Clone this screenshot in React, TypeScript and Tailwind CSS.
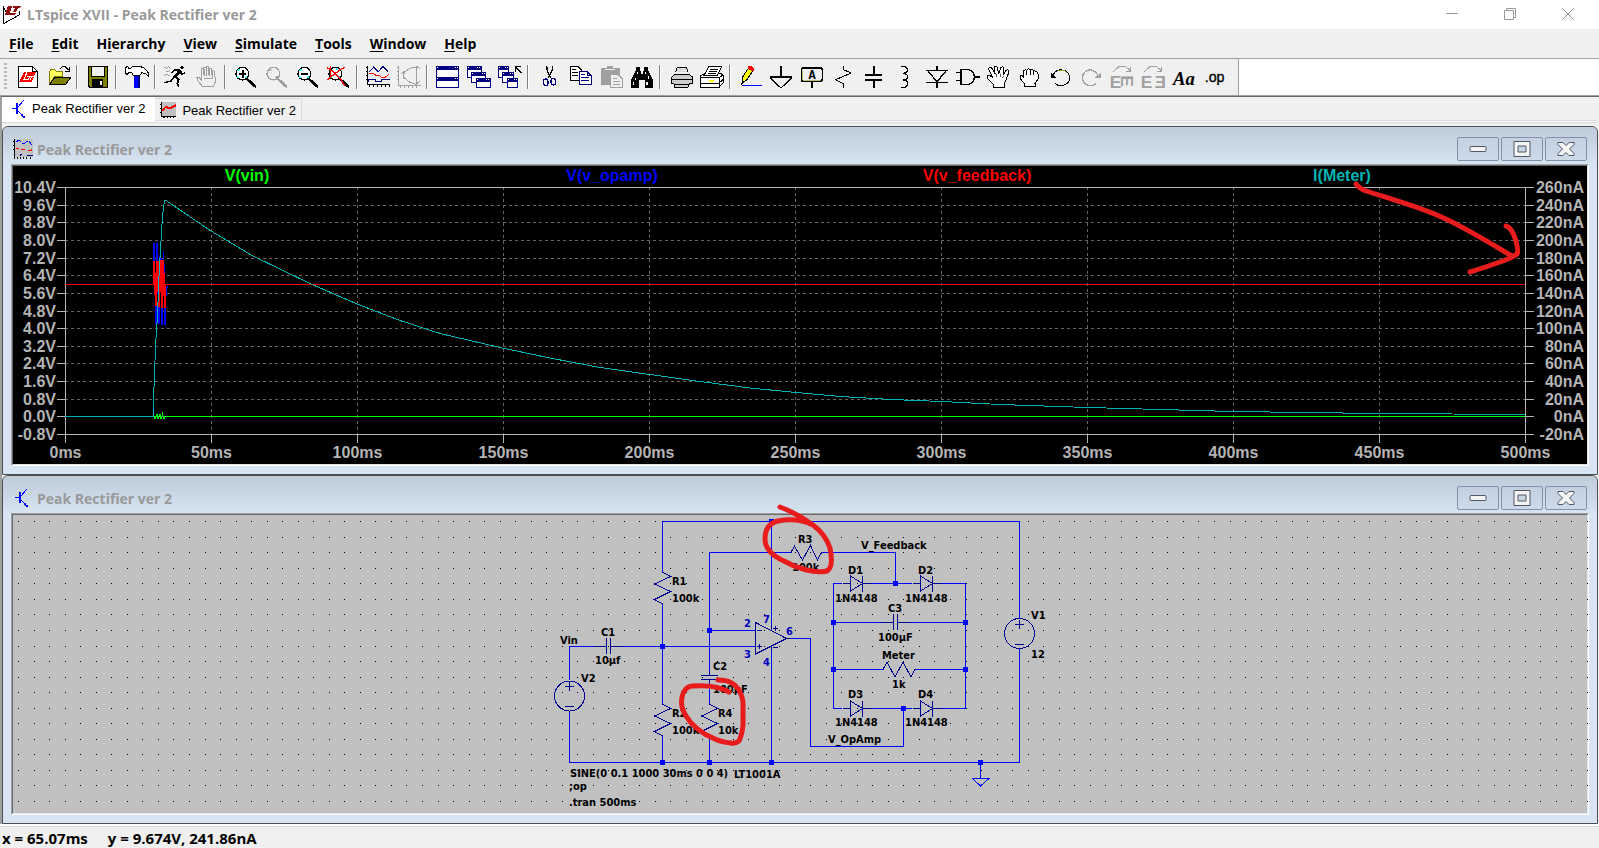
import type { ReactNode } from 'react'

type ToolItem = { label: string; icon: ReactNode } | 'sep'

const MENUS: [string, string, string][] = [
  ['', 'F', 'ile'],
  ['', 'E', 'dit'],
  ['H', 'i', 'erarchy'],
  ['', 'V', 'iew'],
  ['', 'S', 'imulate'],
  ['', 'T', 'ools'],
  ['', 'W', 'indow'],
  ['', 'H', 'elp'],
]

const UI_FONT = "font-['Segoe_UI','Open_Sans','Noto_Sans',sans-serif]"

/* ---------- toolbar icons, drawn on a 72 unit grid (3 units = 1px) ---------- */

const GRAY = '#a0a0a0'

function Magnifier({ color = '#000', glass = '#fff', children }: { color?: string; glass?: string; children?: ReactNode }) {
  return (
    <>
      <circle cx="28" cy="26" r="19" fill={glass} stroke={color} strokeWidth="4" />
      <path d="M42 42L50 50" stroke={color} strokeWidth="5" />
      <path d="M50 49L69 66" stroke={color} strokeWidth="8" />
      {children}
    </>
  )
}

function MiniWindow({ x, y, w = 42, h = 27 }: { x: number; y: number; w?: number; h?: number }) {
  return (
    <>
      <rect x={x + 1} y={y + 1} width={w} height={h} fill="#fff" stroke="#000080" strokeWidth="3" />
      <rect x={x} y={y} width={w + 3} height="12" fill="#000080" />
      <path d={`M${x + 3} ${y + 5}h3M${x + w - 10} ${y + 5}h3M${x + w - 4} ${y + 5}h3`} stroke="#fff" strokeWidth="3" />
    </>
  )
}

const TOOLS: ToolItem[] = [
  {
    label: 'New Schematic',
    icon: (
      <>
        <path d="M9 4H52L66 18V67H9Z" fill="#fff" stroke="#000" strokeWidth="3" />
        <path d="M52 4V18H66" fill="none" stroke="#000" strokeWidth="3" />
        <path d="M26 22H62L50 52H11Z" fill="#f00" />
        <path d="M37 20L27 42H40L46 33H36M46 44L50 33H60" fill="none" stroke="#fff" strokeWidth="3" />
      </>
    ),
  },
  {
    label: 'Open',
    icon: (
      <>
        <path d="M10 58V20L15 14H26L31 20H50V34H26Z" fill="#ffff60" stroke="#808000" strokeWidth="3" />
        <path d="M10 59L26 38H74L58 59Z" fill="#808000" stroke="#000" strokeWidth="3" />
        <path d="M43 10L50 5H58L67 15M69 5V18H56" fill="none" stroke="#000" strokeWidth="3" />
      </>
    ),
  },
  'sep',
  {
    label: 'Save',
    icon: (
      <>
        <path d="M9 4H67V66H14L9 61Z" fill="#808000" stroke="#000" strokeWidth="3" />
        <path d="M18 4H58V33H18Z" fill="#f0f0f0" stroke="#000" strokeWidth="3" />
        <path d="M20 43H55V66H20Z" fill="#000" />
        <path d="M44 48H52V60H44Z" fill="#fff" />
      </>
    ),
  },
  'sep',
  {
    label: 'Control Panel',
    icon: (
      <>
        <path d="M29 32H47V68H29Z" fill="#00f" />
        <path d="M41 32H47V68H41Z" fill="#000080" />
        <path d="M3 9L10 4L15 10H19L26 5H50L62 10L72 22L73 33L64 26L54 23L47 32H28L25 24L15 22L9 28L3 24Z" fill="#fff" stroke="#000" strokeWidth="3" />
      </>
    ),
  },
  'sep',
  {
    label: 'Run',
    icon: (
      <>
        <circle cx="57" cy="8" r="5" fill="#000" />
        <path d="M50 12L57 18L42 36L30 35Z" fill="#000" />
        <path d="M50 16L34 15L25 25M52 20L56 28L66 24M36 34L47 44L43 56L47 66M34 36L24 48L4 53" fill="none" stroke="#000" strokeWidth="5" />
        <path d="M3 5L10 10L16 5L24 10M8 18L16 21L22 14M2 32L12 28L20 32" fill="none" stroke="#777" strokeWidth="2" />
      </>
    ),
  },
  {
    label: 'Halt',
    icon: (
      <>
        <path d="M26 65L12 48L8 36H13L21 44V13Q24 9 28 13V31V8Q32 4 36 8V31V6Q40 2 44 6V31V11Q48 7 52 11V31V19Q57 14 62 19L64 50L58 66Z" fill="#f0f0f0" stroke={GRAY} strokeWidth="3" />
        <path d="M30 13V34M38 8V34M46 10V34M54 18V38M30 40H58M28 65H57" stroke={GRAY} strokeWidth="3" />
      </>
    ),
  },
  'sep',
  {
    label: 'Zoom in',
    icon: (
      <Magnifier>
        <path d="M14 18L20 12M38 38L43 32M12 34L17 40" stroke="#0ff" strokeWidth="4" />
        <path d="M18 27H40M29 16V38" stroke="#000" strokeWidth="5" />
      </Magnifier>
    ),
  },
  {
    label: 'Pan',
    icon: (
      <Magnifier color={GRAY} glass="#f0f0f0">
        <path d="M17 18L23 13M34 40L40 34" stroke={GRAY} strokeWidth="3" />
      </Magnifier>
    ),
  },
  {
    label: 'Zoom back',
    icon: (
      <Magnifier>
        <path d="M14 18L20 12M38 38L43 32M12 34L17 40" stroke="#0ff" strokeWidth="4" />
        <path d="M18 27H40" stroke="#000" strokeWidth="5" />
      </Magnifier>
    ),
  },
  {
    label: 'Zoom full extents',
    icon: (
      <Magnifier>
        <path d="M38 38L43 32M12 34L17 40M30 10L35 14" stroke="#0ff" strokeWidth="4" />
        <path d="M2 7L14 14L28 27L42 40L56 62M56 6L40 16L16 34L4 46M14 4V40" fill="none" stroke="#f00" strokeWidth="4" />
      </Magnifier>
    ),
  },
  'sep',
  {
    label: 'Autorange',
    icon: (
      <>
        <path d="M8 4V58H74M2 8H8M2 20H8M2 32H8M2 44H8M14 58V67M26 58V67M38 58V67M50 58V67M62 58V67M72 58V67" fill="none" stroke="#000" strokeWidth="3" />
        <path d="M14 20L26 6L40 20L54 4L70 20" fill="none" stroke="#000080" strokeWidth="3" />
        <path d="M11 26H26L32 30H42L48 36H62L72 28" fill="none" stroke="#f00" strokeWidth="3" />
        <path d="M11 50V44H32V50H50V44H74" fill="none" stroke="#000080" strokeWidth="3" />
      </>
    ),
  },
  {
    label: 'FFT',
    icon: (
      <>
        <path d="M8 4V62H74M2 8H8M2 20H8M2 32H8M2 44H8M14 62V70M26 62V70M38 62V70M50 62V70M62 62V70M62 4V56M56 10L62 4L72 12M24 42L22 22L50 6H62M22 36L42 52L60 58L72 48M16 26L22 20L28 26" fill="none" stroke={GRAY} strokeWidth="3" />
      </>
    ),
  },
  'sep',
  {
    label: 'Tile windows',
    icon: (
      <>
        <MiniWindow x={2} y={3} w={68} h={32} />
        <MiniWindow x={2} y={35} w={68} h={32} />
      </>
    ),
  },
  {
    label: 'Cascade windows',
    icon: (
      <>
        <MiniWindow x={2} y={3} h={33} />
        <MiniWindow x={16} y={21} h={29} />
        <MiniWindow x={29} y={39} />
      </>
    ),
  },
  {
    label: 'Close all windows',
    icon: (
      <>
        <MiniWindow x={2} y={3} w={32} h={33} />
        <MiniWindow x={16} y={21} w={32} h={29} />
        <MiniWindow x={29} y={39} w={32} />
        <path d="M56 4V20M56 5H72M58 7L73 24" stroke="#000" strokeWidth="4" />
      </>
    ),
  },
  'sep',
  {
    label: 'Cut',
    icon: (
      <>
        <path d="M32 3L34 18L43 38M50 3L48 18L37 38" fill="none" stroke="#000" strokeWidth="4" />
        <ellipse cx="29" cy="52" rx="7" ry="10" fill="none" stroke="#000080" strokeWidth="4" />
        <ellipse cx="52" cy="50" rx="7" ry="10" fill="none" stroke="#000080" strokeWidth="4" />
      </>
    ),
  },
  {
    label: 'Copy',
    icon: (
      <>
        <path d="M9 4H32L44 16V46H9Z" fill="#fff" stroke="#000" strokeWidth="3" />
        <path d="M15 14H28M15 23H34M15 32H34" stroke="#000" strokeWidth="3" />
        <path d="M36 19H60L73 32V58H36Z" fill="#fff" stroke="#000080" strokeWidth="3" />
        <path d="M60 19V32H73M42 29H54M42 38H66M42 47H66" fill="none" stroke="#000080" strokeWidth="3" />
      </>
    ),
  },
  {
    label: 'Paste',
    icon: (
      <>
        <path d="M8 10H26V4H44V10H66V60H8Z" fill={GRAY} />
        <path d="M20 14H52" stroke="#f0f0f0" strokeWidth="3" />
        <path d="M38 29H60L72 40V66H38Z" fill="#f0f0f0" stroke={GRAY} strokeWidth="3" />
        <path d="M44 39H56M44 48H66M44 57H66" stroke={GRAY} strokeWidth="3" />
      </>
    ),
  },
  {
    label: 'Find',
    icon: (
      <>
        <path d="M22 6H32V16L36 20V26H42V20L46 16V6H58V16L66 34L73 48V68H49V44H30V68H5V48L12 34L20 16Z" fill="#000" />
        <path d="M25 20V28M50 20V28M20 38V46M14 50V60M54 50V60M58 34V42" stroke="#fff" strokeWidth="4" />
      </>
    ),
  },
  'sep',
  {
    label: 'Print Preview',
    icon: (
      <>
        <path d="M22 22L28 7H56L60 22" fill="#ddd" stroke="#000" strokeWidth="3" />
        <path d="M9 38L20 28H64L73 36V56H64L60 66H20L18 56H9Z" fill="#ccc" stroke="#000" strokeWidth="3" />
        <path d="M9 42H73M18 57H64" stroke="#000" strokeWidth="3" />
      </>
    ),
  },
  {
    label: 'Print',
    icon: (
      <>
        <path d="M3 34L16 26H66L72 30V54L60 67H3Z" fill="#fff" stroke="#000" strokeWidth="3" />
        <path d="M16 30L30 4H68L56 30Z" fill="#fff" stroke="#000" strokeWidth="3" />
        <path d="M34 12H58M30 19H54M26 26H50M3 38H60V67M3 56H60M60 38L72 30M60 54L72 44" fill="none" stroke="#000" strokeWidth="3" />
        <path d="M30 48H46" stroke="#ff0" strokeWidth="4" />
      </>
    ),
  },
  'sep',
  {
    label: 'Wire',
    icon: (
      <>
        <path d="M14 36L32 8L45 16L27 44L12 56Z" fill="#ff0" stroke="#000" strokeWidth="3" />
        <path d="M30 3H40L47 9V18H40L30 10Z" fill="#f00" />
        <path d="M12 46L22 50L12 58Z" fill="#000" />
        <path d="M11 61H73" stroke="#00f" strokeWidth="3" />
      </>
    ),
  },
  {
    label: 'Ground',
    icon: <path d="M36 3V35M2 36H70M4 38L34 67H38L68 38" fill="none" stroke="#000" strokeWidth="4" />,
  },
  {
    label: 'Label Net',
    icon: (
      <>
        <rect x="4" y="9" width="63" height="40" rx="6" fill="#f0f0f0" stroke="#000" strokeWidth="5" />
        <path d="M8 12V45H63" fill="none" stroke="#a0a020" strokeWidth="2" />
        <path d="M36 50V68" stroke="#000" strokeWidth="4" />
        <text x="36" y="41" textAnchor="middle" fontSize="36" fontWeight="700" fontFamily="Liberation Mono, monospace">
          A
        </text>
      </>
    ),
  },
  {
    label: 'Resistor',
    icon: <path d="M37 3V14L61 24L14 44L36 56V68" fill="none" stroke="#000" strokeWidth="3" />,
  },
  {
    label: 'Capacitor',
    icon: <path d="M35 3V30M35 46V68M10 30H59M10 45H59" fill="none" stroke="#000" strokeWidth="5" />,
  },
  {
    label: 'Inductor',
    icon: <path d="M25 4H36Q44 10 44 15Q42 24 30 25Q44 27 44 35Q44 44 30 45Q44 47 44 56Q42 64 36 67H25" fill="none" stroke="#000" strokeWidth="4" />,
  },
  {
    label: 'Diode',
    icon: <path d="M39 3V17M6 17H73M12 18L39 50L66 18M6 52H73M39 52V68" fill="none" stroke="#000" strokeWidth="4" />,
  },
  {
    label: 'Component',
    icon: (
      <>
        <path d="M18 14H40Q58 18 58 36Q58 54 40 58H18Z" fill="#f0f0f0" stroke="#000" strokeWidth="4" />
        <path d="M2 23H18M2 47H18M58 36H74" stroke="#000" strokeWidth="4" />
      </>
    ),
  },
  {
    label: 'Move',
    icon: (
      <>
        <path d="M22 66V58L3 38L4 31H11L20 38L8 12Q10 5 17 9L28 28L24 8Q28 0 34 8L38 28L44 8Q51 2 54 10L51 30L60 16Q67 12 69 20L60 46L54 58V66Z" fill="#fff" stroke="#000" strokeWidth="3" />
        <path d="M31 28L33 36M44 27L42 36M53 32L50 38" stroke="#000" strokeWidth="2" />
      </>
    ),
  },
  {
    label: 'Drag',
    icon: (
      <>
        <path d="M22 65V56L9 40V32H16L20 36V18Q24 12 29 16Q33 8 40 15Q46 10 50 18Q58 16 63 26V42L54 56V65Z" fill="#fff" stroke="#000" strokeWidth="3" />
        <path d="M29 18V30M40 16V30M50 20V31" stroke="#000" strokeWidth="3" />
      </>
    ),
  },
  {
    label: 'Undo',
    icon: (
      <>
        <path d="M14 36Q18 16 38 14Q62 16 65 36Q66 56 44 62H32L22 56" fill="none" stroke="#000" strokeWidth="3" />
        <path d="M30 15H46L58 23" fill="none" stroke="#a0a020" strokeWidth="3" />
        <path d="M8 22V40H27Z" fill="#000" />
      </>
    ),
  },
  {
    label: 'Redo',
    icon: (
      <>
        <path d="M58 36Q52 16 33 14Q12 18 10 38Q12 58 30 62H40L52 56" fill="none" stroke={GRAY} strokeWidth="4" />
        <path d="M67 22V40H46Z" fill={GRAY} />
      </>
    ),
  },
  {
    label: 'Rotate',
    icon: (
      <g fill={GRAY} fontFamily="Liberation Sans, sans-serif" fontWeight="700">
        <path d="M10 20L28 4H46L60 16M62 6V18H48" fill="none" stroke={GRAY} strokeWidth="3" />
        <text x="-1" y="68" fontSize="52">
          E
        </text>
        <text x="0" y="0" fontSize="52" transform="translate(34 31) rotate(90)">
          E
        </text>
      </g>
    ),
  },
  {
    label: 'Mirror',
    icon: (
      <g fill={GRAY} fontWeight="700">
        <path d="M10 20L28 4H46L60 16M62 6V18H48" fill="none" stroke={GRAY} strokeWidth="3" />
        <text x="-1" y="68" fontSize="52" fontFamily="Liberation Sans, sans-serif">
          E
        </text>
        <text x="41" y="68" fontSize="50" fontFamily="Liberation Sans, DejaVu Sans, sans-serif">
          Ǝ
        </text>
      </g>
    ),
  },
  {
    label: 'Text',
    icon: (
      <text x="3" y="59" fontSize="56" fontStyle="italic" fontWeight="700" fontFamily="Liberation Serif, serif">
        Aa
      </text>
    ),
  },
  {
    label: 'SPICE Directive',
    icon: (
      <text x="5" y="50" fontSize="43" stroke="#000" fontFamily="Liberation Sans, sans-serif">
        .op
      </text>
    ),
  },
]

function Toolbar() {
  return (
    <div className="flex border-b border-[#a0a0a0] bg-white">
      <div className="flex h-9 items-center border-r border-[#a0a0a0] bg-[#f0f0f0] pr-2" role="toolbar">
        <div className="mx-1 h-7 w-[3px] bg-[repeating-linear-gradient(#b8b8b8_0_2px,transparent_2px_4px)]" />
        {TOOLS.map((tool, i) =>
          tool === 'sep' ? (
            <span key={i} className="mx-[3px] h-6 w-0.5 border-l border-[#808080] border-r border-r-white" />
          ) : (
            <button key={i} type="button" title={tool.label} aria-label={tool.label} className="flex h-8 w-[31px] items-center justify-center">
              <svg viewBox="0 0 72 72" className="size-6 overflow-visible" shapeRendering="crispEdges">
                {tool.icon}
              </svg>
            </button>
          ),
        )}
      </div>
    </div>
  )
}

function TransistorIcon() {
  return (
    <svg viewBox="0 0 20 20" className="size-5" shapeRendering="crispEdges">
      <path d="M2 9.500H8M14 1L8 8M8 12L14 18" fill="none" stroke="#00f" />
      <path d="M6 4H8V15H6ZM11 15H13V17H15V19H13L11 17Z" fill="#00f" />
    </svg>
  )
}

function WaveIcon({ small = false }: { small?: boolean }) {
  return (
    <svg viewBox="0 0 20 20" className={small ? 'size-4' : 'size-5'} shapeRendering="crispEdges">
      <path d="M1 0H20V18H1Z" fill="#c0c0c0" />
      {small ? (
        <>
          <path d="M2 0V18H20M0 3H2M0 8H2M0 13H2M5 18V20M9 18V20M13 18V20M17 18V20" fill="none" stroke="#000" strokeWidth="1.5" />
          <path d="M3 11L7 6L12 8L20 4" fill="none" stroke="#f00" strokeWidth="2.5" />
        </>
      ) : (
        <>
          <path d="M1.500 0V20M0 2.500H1M0 6.500H1M0 10.500H1M4.500 18V20M7.500 18V20M10.500 18V20M13.500 18V20M17.500 18V20" fill="none" stroke="#000" />
          <path d="M3 3L6 1L10 5L13 3L16 2L19 6" fill="none" stroke="#00f" strokeDasharray="3 1" />
          <path d="M3 9.500H6M8 10.500H12M15 11.500H18V10" fill="none" stroke="#f00" />
          <path d="M7 17V15.500H9M14 15.500V16.500H20" fill="none" stroke="#000080" />
        </>
      )}
    </svg>
  )
}

function ChildWindow({ title, icon, children }: { title: string; icon: ReactNode; children: ReactNode }) {
  const button =
    'flex h-6 w-[42px] items-center justify-center rounded-[2px] border border-[#8490ad] bg-linear-to-b from-[#c3d0e0] to-[#cddaea]'
  return (
    <section className="rounded-t-md border border-[#4d4f53] bg-[#d7e4f2] px-2 pb-2">
      <header className="-mx-2 flex h-[37px] items-center rounded-t-md bg-linear-to-b from-[#bfcddb] via-[#c9d6e4] to-[#d7e4f2] px-2 pt-[7px]">
        <div className="ml-0.5">{icon}</div>
        <h2 className={`ml-1 flex-1 pt-0.5 text-sm font-bold text-[#999999] ${UI_FONT}`}>{title}</h2>
        <div className="mr-0.5 flex gap-0.5">
          <button type="button" aria-label="Minimize" className={button}>
            <svg viewBox="0 0 18 8" className="h-2 w-[18px]">
              <rect x="1" y="1.5" width="16" height="5" rx="1" fill="#f4f4f4" stroke="#535666" />
            </svg>
          </button>
          <button type="button" aria-label="Maximize" className={button}>
            <svg viewBox="0 0 18 16" className="h-4 w-[18px]">
              <path d="M1 .5H17V15.500H1ZM5 5V11H13V5Z" fill="#f4f4f4" fillRule="evenodd" stroke="#535666" />
            </svg>
          </button>
          <button type="button" aria-label="Close" className={button}>
            <svg viewBox="0 0 18 16" className="h-4 w-[18px]">
              <path d="M1 1.500H6L9 4.500L12 1.500H17V3.500L12.500 8L17 12.500V14.500H12L9 11.500L6 14.500H1V12.500L5.500 8L1 3.500Z" fill="#f4f4f4" stroke="#535666" strokeLinejoin="round" />
            </svg>
          </button>
        </div>
      </header>
      <div className="border border-b-white border-l-[#a0a0a0] border-r-white border-t-[#a0a0a0]">
        <div className="border border-b-[#e3e3e3] border-l-[#696969] border-r-[#e3e3e3] border-t-[#696969]">{children}</div>
      </div>
    </section>
  )
}

/* ---------- waveform plot ---------- */

const PLOT = { left: 52, right: 1512, top: 21, bottom: 268 }
const VOLT_LABELS = ['10.4V', '9.6V', '8.8V', '8.0V', '7.2V', '6.4V', '5.6V', '4.8V', '4.0V', '3.2V', '2.4V', '1.6V', '0.8V', '0.0V', '-0.8V']
const AMP_LABELS = ['260nA', '240nA', '220nA', '200nA', '180nA', '160nA', '140nA', '120nA', '100nA', '80nA', '60nA', '40nA', '20nA', '0nA', '-20nA']
const TRACES = [
  { name: 'V(vin)', color: '#00ff00' },
  { name: 'V(v_opamp)', color: '#0000ff' },
  { name: 'V(v_feedback)', color: '#ff0000' },
  { name: 'I(Meter)', color: '#00b4b4' },
]

function Plot() {
  const { left, right, top, bottom } = PLOT
  const rowY = (i: number) => Math.round(top + ((bottom - top) * i) / 14) + 0.5
  const colX = (i: number) => left + 146 * i + 0.5

  return (
    <svg viewBox="0 0 1574 298" className="block h-auto w-full bg-black" role="img" aria-label="Waveform plot">
      <g fontFamily="Liberation Sans, Arial, sans-serif" fontSize="16" fontWeight="700" fill="#b4b4b4">
        {TRACES.map((t, i) => (
          <text key={t.name} x={234 + 365 * i} y="15" textAnchor="middle" fill={t.color}>
            {t.name}
          </text>
        ))}
        {VOLT_LABELS.map((v, i) => (
          <text key={v} x="43" y={Math.round(rowY(i) + 5)} textAnchor="end">
            {v}
          </text>
        ))}
        {AMP_LABELS.map((v, i) => (
          <text key={v} x="1571" y={Math.round(rowY(i) + 5)} textAnchor="end">
            {v}
          </text>
        ))}
        {Array.from({ length: 11 }, (_, i) => (
          <text key={i} x={colX(i)} y="292" textAnchor="middle">
            {i * 50}ms
          </text>
        ))}
      </g>

      <g shapeRendering="crispEdges" fill="none">
        <g stroke="#666666" strokeDasharray="3 3">
          {Array.from({ length: 13 }, (_, i) => (
            <path key={i} d={`M${left} ${rowY(i + 1)}H${right}`} />
          ))}
          {Array.from({ length: 9 }, (_, i) => (
            <path key={i} d={`M${colX(i + 1)} ${top}V${bottom}`} />
          ))}
        </g>
        <g stroke="#b4b4b4">
          <path d={`M${left + 0.5} ${top + 0.5}H${right + 0.5}V${bottom + 0.5}H${left + 0.5}Z`} />
          {VOLT_LABELS.map((v, i) => (
            <path key={v} d={`M${left - 8} ${rowY(i)}H${left}M${right} ${rowY(i)}h9`} />
          ))}
          {Array.from({ length: 11 }, (_, i) => (
            <path key={i} d={`M${colX(i)} ${bottom}v9`} />
          ))}
        </g>
        <path stroke="#00ff00" d="M52 250.500H141L142 253L144 248L145 253L147 248L148 253L149.500 248L151 253V250.500H1512" />
        <path
          stroke="#0000ff"
          strokeWidth="1.5"
          d="M141 118V77L143 159L144 77L146 158L147.500 77L149 159L150.500 85L152 159L153 121H155"
        />
        <path stroke="#ff0000" strokeWidth="2" d="M141 118V95L143 140L144.500 95L146 141L147.500 94L149 142L150 94L152 142V118" />
        <path stroke="#ff0000" d="M52 118.500H141M152 118.500H1512" />
        <path
          stroke="#00b4b4"
          d="M52 250.500H140.500V233L141.500 210L142.500 180L144.500 150L146 110L148 75L149.500 50L151.500 34.500H153L198 65L240 90L298 118L344 138L387 154.500L427 167.500L487 181.500L537 192L587 201.500L637 208.500L687 215.500L737 222L783 226.500L827 230.500L878 233.500L929 235.500L987 238.500L1075 241.500L1220 245.500L1366 247.500L1512 248.500"
        />
      </g>

      <path
        d="M1343 18Q1347 23 1353 25C1375 32 1400 39 1424 49C1450 60 1475 76 1499 90M1493 60Q1498 61 1502 72Q1506 85 1504 88Q1500 91 1490 95Q1470 102 1457 106"
        fill="none"
        stroke="#e81c1c"
        strokeWidth="5"
        strokeLinecap="round"
        strokeLinejoin="round"
      />
    </svg>
  )
}

/* ---------- schematic ---------- */

const GRID = Array.from({ length: 102 }, (_, i) =>
  Array.from({ length: 19 }, (_, j) => `M${Math.round(5.2 + 15.53 * i)} ${Math.round(6.3 + 15.53 * j)}h1v1h-1z`).join(''),
).join('')

const NODES: [number, number][] = [
  [758, 6], [649, 131], [696, 115], [649, 247], [696, 247], [758, 247], [967, 247],
  [882, 68], [890, 193], [820, 107], [952, 107], [820, 154], [952, 154],
]

const LABELS: [number, number, string][] = [
  [659, 70, 'R1'],
  [659, 87, '100k'],
  [588, 121, 'C1'],
  [582, 149, '10µf'],
  [547, 129, 'Vin'],
  [568, 167, 'V2'],
  [659, 202, 'R2'],
  [659, 219, '100k'],
  [700, 155, 'C2'],
  [700, 178, '100µF'],
  [705, 202, 'R4'],
  [705, 219, '10k'],
  [785, 28, 'R3'],
  [779, 56, '100k'],
  [848, 34, 'V_Feedback'],
  [835, 59, 'D1'],
  [905, 59, 'D2'],
  [822, 87, '1N4148'],
  [892, 87, '1N4148'],
  [875, 97, 'C3'],
  [865, 126, '100µF'],
  [869, 144, 'Meter'],
  [879, 173, '1k'],
  [835, 183, 'D3'],
  [905, 183, 'D4'],
  [822, 211, '1N4148'],
  [892, 211, '1N4148'],
  [815, 228, 'V_OpAmp'],
  [1018, 104, 'V1'],
  [1018, 143, '12'],
  [557, 262, 'SINE(0 0.1 1000 30ms 0 0 4)'],
  [721, 263, 'LT1001A'],
  [556, 275, ';op'],
  [556, 291, '.tran 500ms'],
]

const PINS: [number, number, string][] = [
  [731, 112, '2'],
  [750, 108, '7'],
  [773, 120, '6'],
  [731, 143, '3'],
  [750, 151, '4'],
]

function Resistor({ x, y }: { x: number; y: number }) {
  return <path d={`M${x} ${y}l8 4.500l-16 7.500l16 7.500l-16 8l8 4.500`} />
}

function Diode({ x, y }: { x: number; y: number }) {
  return <path d={`M${x - 8} ${y}h8v-7.500l12 7.500l-12 7.500v-7.500M${x + 12} ${y - 8}v16M${x + 12} ${y}h9`} />
}

function Schematic() {
  return (
    <svg viewBox="0 0 1574 298" className="block h-auto w-full overflow-visible bg-[#c0c0c0]" role="img" aria-label="Circuit schematic">
      <path d={GRID} fill="#000" shapeRendering="crispEdges" />

      <g fill="none" stroke="#0000ff" shapeRendering="crispEdges">
        <path d="M649.500 57V6.500H1006.500V103M1006.500 133V247.500H556.500V197M556.500 165V131.500H581" />
        <path d="M610 131.500H742M649.500 89V189M649.500 221V247" />
        <path d="M778 37.500H696.500V156M696.500 168V189M696.500 221V247M696 115.500H742M758.500 6V110M758.500 136V247" />
        <path d="M778 123.500H797.500V231.500H890.500V193M809 37.500H882.500V68" />
        <path d="M829 68.500H820.500V193.500H829M858 68.500H899M928 68.500H952.500V193.500H928M858 193.500H899" />
        <path d="M820 107.500H868M898 107.500H952M820 154.500H870M902 154.500H952M967.500 247V263" />
      </g>
      <g fill="#0000ff" shapeRendering="crispEdges">
        {NODES.map(([x, y]) => (
          <rect key={`${x}-${y}`} x={x - 2} y={y - 2} width="5" height="5" />
        ))}
      </g>

      <g fill="none" stroke="#000090" shapeRendering="crispEdges">
        <Resistor x={649.5} y={57} />
        <Resistor x={649.5} y={189} />
        <Resistor x={696.5} y={189} />
        <path d="M778 37.500L781.500 31L789.500 45L797.500 30.500L804.500 45L808.500 37.500" />
        <path d="M870 154.500L874 147L882 162L890 147L898 162L902 154.500" />
        <path d="M581 131.500H593.500M597.500 131.500H610M593.500 123V139M597.500 123V139" />
        <path d="M688 160.500H705M688 164.500H705M696.500 156V160M696.500 165V168" />
        <path d="M868 107.500H880M884 107.500H898M880.500 99V115M884.500 99V115" />
        <Diode x={837.5} y={68.5} />
        <Diode x={907.5} y={68.5} />
        <Diode x={837.5} y={193.5} />
        <Diode x={907.5} y={193.5} />
        <path d="M742.500 107.500V139L773.500 123.500ZM773 123.500H778M758.500 110V115M758.500 131V136" />
        <path d="M744 115.500H749M744 131.500H749M746.500 129V134M760 113.500H765M762.500 111V116M760 132.500H765" />
        <circle cx="556.5" cy="181" r="15" />
        <path d="M552 171.500H561M556.500 167V176M552 191.500H561" />
        <circle cx="1006.5" cy="118.500" r="15" />
        <path d="M1002 109.500H1011M1006.500 105V114M1002 129.500H1011" />
      </g>
      <path d="M959.500 263.500H976L967.500 271Z" fill="none" stroke="#0000ff" shapeRendering="crispEdges" />

      <g fontFamily="Tahoma, DejaVu Sans Condensed, DejaVu Sans, sans-serif" fontSize="11" fontWeight="700">
        {LABELS.map(([x, y, text]) => (
          <text key={`${x}-${y}`} x={x} y={y}>
            {text}
          </text>
        ))}
        {PINS.map(([x, y, text]) => (
          <text key={text} x={x} y={y} fill="#0000c0">
            {text}
          </text>
        ))}
      </g>

      <g fill="none" stroke="#e81c1c" strokeWidth="5" strokeLinecap="round" strokeLinejoin="round">
        <path d="M767 -8C778 -4 790 3 800 10C788 4 775 4 765 6C756 8 752 15 752 24C752 34 760 41 771 46C783 53 802 59 814 56C820 53 819 43 817 33C814 24 808 16 800 10" />
        <path d="M705 165C716 165 721 168 726 175C731 184 730 190 730 197V210Q729 220 726 226Q722 229 718 228Q708 227 702 224C687 218 679 211 673 201Q667 192 669 182Q671 172 679 171C692 170 706 171 716 177" />
      </g>
    </svg>
  )
}

export default function App() {
  return (
    <div className="flex min-h-screen flex-col bg-[#f0f0f0] text-black">
      <header className="flex h-[29px] items-center bg-white">
        <svg viewBox="0 0 20 20" className="ml-0.5 size-5" shapeRendering="crispEdges">
          <path d="M1 1V19L17 10V6M1 1L5 9" fill="none" stroke="#000" />
          <path d="M6 1H10L8 8H14L12 10H3Z" fill="#901010" />
          <path d="M11 1H19L18 3H16L14 7H11L13 3H11Z" fill="#901010" />
        </svg>
        <h1 className={`ml-[5px] flex-1 text-sm font-bold text-[#999999] ${UI_FONT}`}>LTspice XVII - Peak Rectifier ver 2</h1>
        <div className="flex pr-0.5 pb-px text-[#999999]">
          <button type="button" aria-label="Minimize" className="flex h-7 w-[58px] items-center justify-center">
            <svg viewBox="0 0 12 12" className="size-3" fill="none" stroke="currentColor">
              <path d="M0 5.500H12" />
            </svg>
          </button>
          <button type="button" aria-label="Restore" className="flex h-7 w-[58px] items-center justify-center">
            <svg viewBox="0 0 12 12" className="size-3" fill="none" stroke="currentColor">
              <path d="M.5 2.500H9.500V11.500H.5ZM2.500 2.500V.5H11.500V9.500H9.500" />
            </svg>
          </button>
          <button type="button" aria-label="Close" className="flex h-7 w-[58px] items-center justify-center">
            <svg viewBox="0 0 12 12" className="size-3" fill="none" stroke="currentColor">
              <path d="M0 0L12 12M12 0L0 12" />
            </svg>
          </button>
        </div>
      </header>

      <nav className={`flex h-[30px] items-center border-b border-[#a0a0a0] ${UI_FONT}`} aria-label="Menu">
        {MENUS.map(([before, key, after]) => (
          <button key={before + key + after} type="button" className="px-[9px] text-sm font-bold">
            {before}
            <span className="underline underline-offset-2">{key}</span>
            {after}
          </button>
        ))}
      </nav>

      <Toolbar />

      <div className="border-l-2 border-t border-l-[#a0a0a0] border-t-[#696969]">
        <div className="mr-0.5 flex h-6 items-end border-b border-[#d9d9d9] font-['Liberation_Sans',Arial,sans-serif] text-[13px]" role="tablist">
          <button type="button" role="tab" aria-selected="true" className="-mb-px flex h-6 items-center bg-white pl-2 pr-2.5">
            <TransistorIcon />
            <span className="ml-0.5">Peak Rectifier ver 2</span>
          </button>
          <button type="button" role="tab" aria-selected="false" className="flex h-[22px] items-center border-r border-t border-[#d9d9d9] px-[5px]">
            <WaveIcon small />
            <span className="ml-1.5 pt-0.5">Peak Rectifier ver 2</span>
          </button>
        </div>
        <div className="mr-0.5 h-0.5 border-b border-[#d9d9d9] bg-white" />
      </div>

      <main className="border-l-2 border-[#a0a0a0] pr-px pt-[3px]">
        <ChildWindow title="Peak Rectifier ver 2" icon={<WaveIcon />}>
          <Plot />
        </ChildWindow>
        <ChildWindow title="Peak Rectifier ver 2" icon={<TransistorIcon />}>
          <Schematic />
        </ChildWindow>
      </main>

      <footer className="border-t-2 border-white">
        <div className={`flex h-[21px] items-end gap-5 border-t border-[#d7d7d7] pl-0.5 text-[15px] leading-[18px] font-bold ${UI_FONT}`}>
          <span>x = 65.07ms</span>
          <span>y = 9.674V, 241.86nA</span>
        </div>
      </footer>
    </div>
  )
}
